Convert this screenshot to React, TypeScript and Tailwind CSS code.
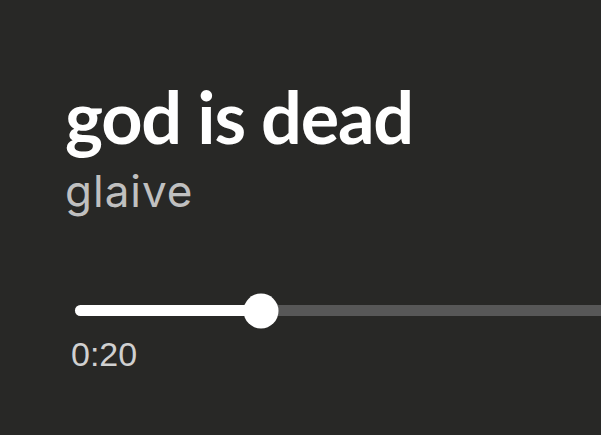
const progress = 186; // played part of the track, px

export default function App() {
  return (
    <div className="flex h-[435px] w-[601px] flex-col overflow-hidden bg-[#282826] pl-[65px] pt-[80px]">
      <h1 className="font-['Lato',sans-serif] text-[72px] font-bold leading-[72px] tracking-[-1.2px] text-white">
        god is dead
      </h1>
      <p className="mt-[15px] font-['Inter',sans-serif] text-[44px] leading-[48px] tracking-[1px] text-[#c0c0c0]">
        glaive
      </p>

      <div className="relative ml-[10px] mt-[90px] h-[11px] w-[600px] shrink-0 rounded-full bg-[#575757]">
        <div className="h-full rounded-full bg-white" style={{ width: progress }} />
        <div
          className="absolute top-1/2 h-[35px] w-[35px] -translate-x-1/2 -translate-y-1/2 rounded-full bg-white"
          style={{ left: progress }}
        />
      </div>

      <div className="ml-[6px] mt-[18px] font-['Liberation_Sans',sans-serif] text-[34px] leading-[40px] text-[#d0d0d0]">
        0:20
      </div>
    </div>
  );
}
